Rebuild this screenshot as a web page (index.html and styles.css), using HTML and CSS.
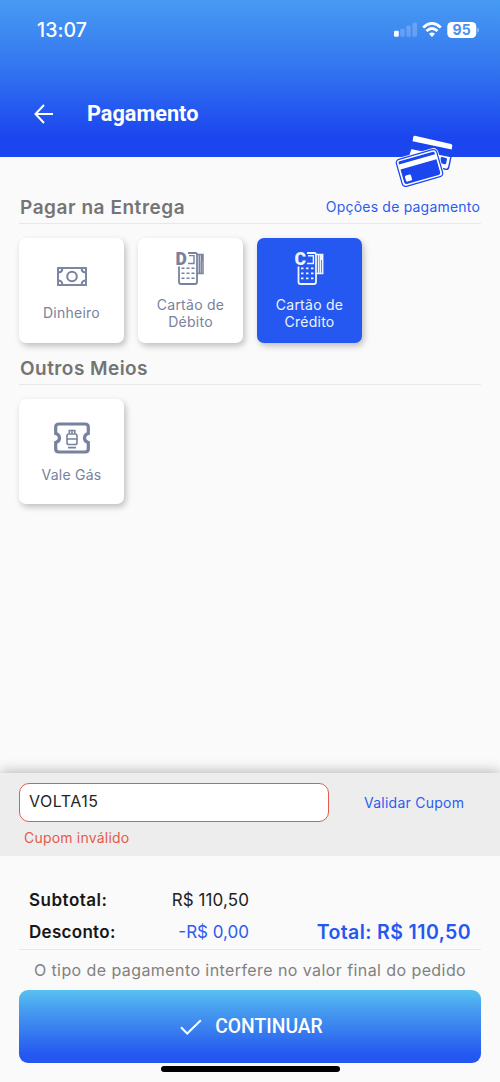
FILE: index.html
```html
<!DOCTYPE html>
<html lang="pt-BR">
<head>
<meta charset="utf-8">
<title>Pagamento</title>
<link rel="stylesheet" href="styles.css">
</head>
<body>
<div class="screen">
  <header class="header">
    <div class="status">
      <span class="time">13:07</span>
      <svg class="signals" width="86" height="18" viewBox="0 0 86 18">
        <g fill="#fff">
          <rect x="0" y="9.8" width="4.8" height="6" rx="1.3"/>
          <g opacity=".2"><rect x="6.2" y="7.8" width="4.5" height="8" rx="1.2"/><rect x="12.3" y="4.6" width="4.5" height="11.2" rx="1.2"/><rect x="18.4" y="1.8" width="4.6" height="14" rx="1.2"/></g>
        </g>
        <g fill="none" stroke="#fff" stroke-width="2.7"><path d="M29.2 6.5Q38 -1.6 46.8 6.5"/><path d="M32.5 10Q38 5 43.5 10"/></g>
        <path d="M35 12.8Q38 10.2 41 12.8L38 16Z" fill="#fff"/>
        <rect x="53.3" y="1" width="29" height="16" rx="4.5" fill="#fff"/>
        <path d="M83.4 6.5Q85 7 85 9T83.4 11.5Z" fill="#fff" opacity=".5"/>
        <text class="battery" x="67.8" y="14.2">95</text>
      </svg>
    </div>
    <div class="titlebar">
      <svg width="20" height="20" viewBox="0 0 20 20" fill="none" stroke="#fff" stroke-width="2"><path d="M19 10H2M10 1L1.5 10L10 19"/></svg>
      <h1>Pagamento</h1>
    </div>
    <svg class="cards-badge" width="60" height="54" viewBox="0 0 60 54">
      <path d="M19.8 1.8L56 9.9Q57.5 10.3 57.3 11.8L56.7 15.6L17.6 7.3L18.2 3.2Q18.5 1.6 19.8 1.8Z" fill="#fff"/>
      <path d="M15.8 14.2L56 22.6L53.8 33Q53.2 35.8 50.5 35.3L12 27Z" fill="#fff" stroke="#1b45ef" stroke-width="1.4"/>
      <rect x="45.2" y="23.4" width="6.4" height="6.4" rx="1.2" transform="rotate(12 48.3 26.8)" fill="#1b45ef"/>
      <g transform="rotate(-16 24.5 34)">
        <rect x="3.5" y="20" width="42" height="28" rx="3.5" fill="#fff" stroke="#fff" stroke-width="3"/>
        <rect x="3.5" y="20" width="42" height="28" rx="3.5" fill="#fff" stroke="#1b45ef" stroke-width="1.3"/>
        <path d="M5.8 23.4Q5.8 22.1 7.2 22.1H41.8Q43.2 22.1 43.2 23.4V25H5.8ZM5.8 30.3H43.2V43.5Q43.2 45.9 41 45.9H8Q5.8 45.9 5.8 43.5Z" fill="#1b45ef"/>
        <rect x="8" y="37.5" width="6.3" height="6.3" rx="1.4" fill="#fff"/>
      </g>
    </svg>
  </header>

  <main class="content">
    <div class="section-head"><h2>Pagar na Entrega</h2><a class="link options">Opções de pagamento</a></div>
    <div class="options-row">
      <div class="card">
        <svg class="money" width="30" height="19" viewBox="0 0 30 19" fill="none" stroke="currentColor">
          <rect x="1" y="1" width="28" height="17" stroke-width="1.9"/>
          <circle cx="15" cy="9.5" r="4.8" stroke-width="2"/>
          <path d="M2 5.5Q5 5 5.4 2M28 5.5Q25 5 24.6 2M2 13.5Q5 14 5.4 17M28 13.5Q25 14 24.6 17" stroke-width="1.9"/>
        </svg>
        <span>Dinheiro</span>
      </div>
      <div class="card two-lines">
        <svg width="32" height="35" viewBox="-1 0 32 35" fill="none" stroke="currentColor">
          <path d="M12 2H19.5Q21 2 21 3.5V31Q21 33 19 33H5Q3 33 3 31V15.5" stroke-width="1.8"/>
          <path d="M13 4.6H18V12.5H12" stroke-width="1.4"/>
          <path d="M21 3.6H27V22.5H21M23.3 3.8V22M25.2 10V22" stroke-width="1.5"/><path d="M25.8 4V10" stroke-width="2.4"/>
          <path d="M5.5 17.3H8.5M10.5 17.3H13.5M15.5 17.3H18.5M5.5 22.3H8.5M10.5 22.3H13.5M15.5 22.3H18.5M5.5 27.3H8.5M10.5 27.3H13.5M15.5 27.3H18.5" stroke-width="1.6"/>
          <text class="letter" x="-.5" y="14">D</text>
        </svg>
        <span>Cartão de<br>Débito</span>
      </div>
      <div class="card two-lines selected">
        <svg width="32" height="35" viewBox="-1 0 32 35" fill="none" stroke="currentColor">
          <path d="M12 2H19.5Q21 2 21 3.5V31Q21 33 19 33H5.5Q3.5 33 3.5 31V15.5" stroke-width="1.8"/>
          <path d="M13 4.8H18.4V12.5H12" stroke-width="1.4"/>
          <path d="M21 3.6H27.7V22.5H21M23.5 3.8V22M25.5 4V22" stroke-width="1.5"/><path d="M26.2 4V9" stroke-width="1.6"/>
          <path d="M6 17.3H8.5M11 17.3H13.5M16 17.3H18.5M6 22.3H8.5M11 22.3H13.5M16 22.3H18.5M6 27.3H8.5M11 27.3H13.5M16 27.3H18.5" stroke-width="1.8"/>
          <text class="letter" x="-.5" y="14">C</text>
        </svg>
        <span>Cartão de<br>Crédito</span>
      </div>
    </div>
    <div class="section-head second"><h2>Outros Meios</h2></div>
    <div class="options-row">
      <div class="card voucher">
        <svg width="36" height="32" viewBox="0 0 36 32" fill="none" stroke="currentColor">
          <path d="M5 2H31Q34.3 2 34.3 5V11.5Q30.5 12.5 30.5 16T34.3 20.5V27Q34.3 30 31 30H5Q1.7 30 1.7 27V20.5Q5.5 19.5 5.5 16T1.7 11.5V5Q1.7 2 5 2Z" stroke-width="3.2"/>
          <rect x="13" y="12" width="10" height="10.5" rx="1.8" stroke-width="1.6"/>
          <path d="M15.3 11.5V8.5H20.8V11.5M18 9V11.5M13 17H23M14 25.6H22" stroke-width="1.6"/>
        </svg>
        <span>Vale Gás</span>
      </div>
    </div>
  </main>

  <section class="coupon">
    <div class="coupon-row">
      <div class="field">VOLTA15</div>
      <a class="link validate">Validar Cupom</a>
    </div>
    <div class="error">Cupom inválido</div>
  </section>

  <footer class="summary">
    <div class="totals">
      <div class="line"><b class="sub-label">Subtotal:</b><span class="sub-value">R$ 110,50</span></div>
      <div class="line"><b class="disc-label">Desconto:</b><span class="disc-value">-R$ 0,00</span><strong>Total: R$ 110,50</strong></div>
    </div>
    <p class="note">O tipo de pagamento interfere no valor final do pedido</p>
    <div class="continue">
      <svg width="22" height="16" viewBox="0 0 22 16" fill="none" stroke="#fff" stroke-width="2"><path d="M1 8.3L7.2 14.5L20.8 1.2"/></svg>
      <span>CONTINUAR</span>
    </div>
    <div class="home"></div>
  </footer>
</div>
</body>
</html>
```
FILE: styles.css
```css
* { box-sizing: border-box; }
body { margin: 0; font-family: Inter, "Liberation Sans", sans-serif; }
h1, h2, p { margin: 0; }
svg { overflow: visible; }
span, a, b, strong, h1, h2, p { white-space: nowrap; }
.screen { width: 500px; height: 1082px; display: flex; flex-direction: column; background: #fafafa; overflow: hidden; }

.header { position: relative; height: 157px; flex: none; background: linear-gradient(#479bf3 0%, #3478ef 40%, #1b45ef 88%, #1b45ef 100%); color: #fff; }
.status { height: 60px; padding: 0 20px 0 37px; display: flex; align-items: center; justify-content: space-between; }
.time { font-size: 19.5px; font-weight: 500; letter-spacing: .1px; }
.battery { font: 700 14px Inter, sans-serif; fill: #4a90f2; text-anchor: middle; letter-spacing: .3px; }
.titlebar { margin-top: 34px; height: 40px; padding-left: 34px; display: flex; align-items: center; gap: 33px; }
.titlebar h1 { font: 700 21.7px/40px Roboto, sans-serif; }
.cards-badge { position: absolute; left: 395px; top: 134px; }

.content { flex: 1; padding: 34px 19px 0; }
.section-head { height: 33px; padding: 0 1px; border-bottom: 1px solid #e8e8e8; display: flex; justify-content: space-between; line-height: 32px; margin: 0 0 14px; }
.section-head h2 { font-size: 19px; font-weight: 600; line-height: 33px; color: #747474; letter-spacing: .55px; }
.section-head.second { margin-top: 9px; }
.section-head.second h2 { letter-spacing: .45px; }
.link { color: #2d5cf0; font-size: 14px; letter-spacing: .25px; }
.options { letter-spacing: .2px; }
.options-row { display: flex; gap: 14px; }
.card { width: 105px; height: 105px; border-radius: 7px; background: #fff; color: #78829e; box-shadow: 2px 3px 6px rgba(0,0,0,.24); display: flex; flex-direction: column; align-items: center; font-size: 14px; line-height: 17px; letter-spacing: .25px; text-align: center; }
.card .money { margin: 29px 0 18px; }
.two-lines svg { margin: 13px 0 10px; }
.voucher svg { margin: 23px 0 12px; }
.selected { background: #2558f0; color: #edf3ff; }
.letter { font: 900 17.5px Roboto, sans-serif; fill: currentColor; stroke: none; }

.coupon { height: 83px; flex: none; padding: 10px 19px 0; background: #ededed; box-shadow: 0 -2px 12px rgba(0,0,0,.25); clip-path: inset(-20px 0 0 0); }
.coupon-row { display: flex; align-items: center; gap: 35px; }
.field { width: 310px; height: 38.5px; padding: 0 9px; border: 1.5px solid #e35b50; border-radius: 10px; background: #fff; color: #252525; font-size: 16px; line-height: 34px; letter-spacing: .5px; }
.validate { padding-top: 1px; }
.error { margin: 6.5px 0 0 5px; color: #e35b50; font-size: 14px; line-height: 20px; letter-spacing: .2px; }

.summary { height: 226px; flex: none; padding: 28px 19px 0; background: #fafafa; }
.totals { height: 66px; padding: 0 10px; border-bottom: 1px solid #e8e8e8; }
.line { display: grid; grid-template-columns: 100px 120px 1fr; height: 31.5px; line-height: 32px; font-size: 17px; color: #222; }
.line b { font-weight: 600; color: #171717; }
.line .sub-label { letter-spacing: .5px; }
.line .disc-label { letter-spacing: .3px; }
.line span { text-align: right; letter-spacing: .1px; }
.line .disc-value { color: #2d5cf0; letter-spacing: 0; }
.line strong { text-align: right; font-size: 19.5px; font-weight: 600; color: #2558f0; letter-spacing: .4px; }
.note { height: 40px; line-height: 41px; text-align: center; color: #818181; font-size: 16px; letter-spacing: .42px; }
.continue { height: 73px; border-radius: 9px; background: linear-gradient(#58c1f1 0%, #489ff0 25%, #2457ef 90%); display: flex; align-items: center; justify-content: center; gap: 13px; color: #fff; padding-left: 3px; }
.continue span { font: 500 19.3px/24px Roboto, sans-serif; padding-top: 1px; }
.home { width: 179px; height: 6px; margin: 3px auto 0; border-radius: 3px; background: #000; }
```
